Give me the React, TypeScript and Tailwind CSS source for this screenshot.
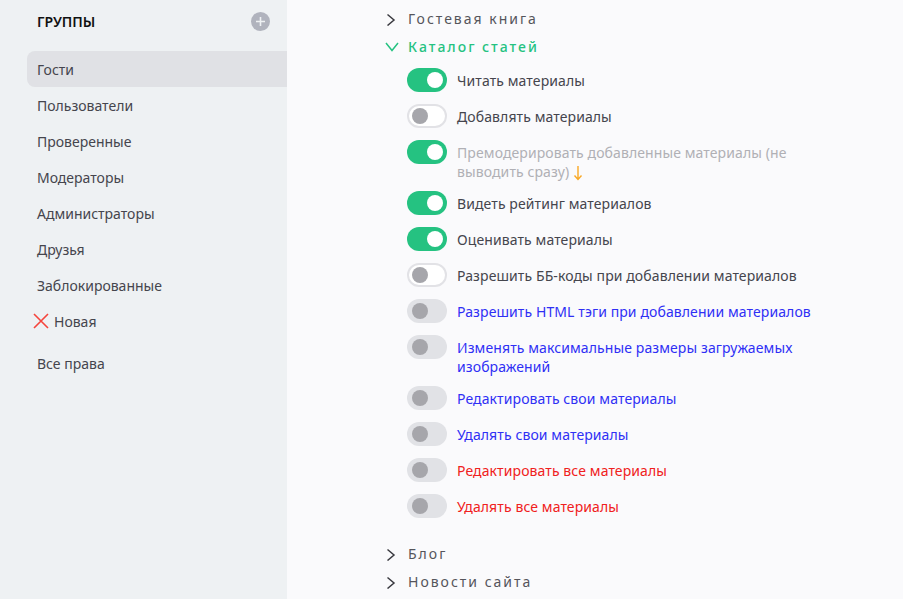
import React from "react";

const font = { fontFamily: '"Noto Sans", sans-serif' };

const groups = ["Гости", "Пользователи", "Проверенные", "Модераторы", "Администраторы", "Друзья", "Заблокированные"];

type Perm = { text: string[]; on?: boolean; outline?: boolean; color: string; arrow?: boolean };

const perms: Perm[] = [
  { text: ["Читать материалы"], on: true, color: "text-[#45454d]" },
  { text: ["Добавлять материалы"], outline: true, color: "text-[#45454d]" },
  { text: ["Премодерировать добавленные материалы (не", "выводить сразу)"], on: true, color: "text-[#b0b0b5]", arrow: true },
  { text: ["Видеть рейтинг материалов"], on: true, color: "text-[#45454d]" },
  { text: ["Оценивать материалы"], on: true, color: "text-[#45454d]" },
  { text: ["Разрешить ББ-коды при добавлении материалов"], outline: true, color: "text-[#45454d]" },
  { text: ["Разрешить HTML тэги при добавлении материалов"], color: "text-[#2f2ff5]" },
  { text: ["Изменять максимальные размеры загружаемых", "изображений"], color: "text-[#2f2ff5]" },
  { text: ["Редактировать свои материалы"], color: "text-[#2f2ff5]" },
  { text: ["Удалять свои материалы"], color: "text-[#2f2ff5]" },
  { text: ["Редактировать все материалы"], color: "text-[#f02020]" },
  { text: ["Удалять все материалы"], color: "text-[#f02020]" },
];

function Toggle({ on, outline }: { on?: boolean; outline?: boolean }) {
  if (on) {
    return (
      <div className="w-10 h-6 rounded-full bg-[#25c281] flex items-center justify-end pr-[4px] shrink-0">
        <div className="w-4 h-4 rounded-full bg-white" />
      </div>
    );
  }
  if (outline) {
    return (
      <div className="w-10 h-6 rounded-full flex items-center pl-[3px] shrink-0 bg-white border-2 border-[#e2e2e6]">
        <div className="w-4 h-4 rounded-full bg-[#a6a6ab]" />
      </div>
    );
  }
  return (
    <div className="w-10 h-6 rounded-full flex items-center pl-[5px] shrink-0 bg-[#e1e2e6]">
      <div className="w-4 h-4 rounded-full bg-[#a6a6ab]" />
    </div>
  );
}

function Chevron({ open }: { open?: boolean }) {
  return (
    <svg width="16" height="16" viewBox="0 0 16 16" fill="none" className="shrink-0">
      {open ? (
        <path d="M3 5 L9 12.5 L15 5" stroke="#25c281" strokeWidth="1.5" />
      ) : (
        <path d="M4.5 4.5 L11 10 L4.5 15.5" stroke="#3a3a40" strokeWidth="1.5" />
      )}
    </svg>
  );
}

function Section({ title, open }: { title: string; open?: boolean }) {
  return (
    <div className="flex items-center gap-[9px] h-[28px]">
      <Chevron open={open} />
      <span
        className={
          "text-[14px] tracking-[2px] " + (open ? "text-[#25c281] font-medium" : "text-[#55555b]")
        }
      >
        {title}
      </span>
    </div>
  );
}

export default function App() {
  return (
    <div className="flex w-[903px] h-[599px] overflow-hidden bg-[#fafafc]" style={font}>
      <aside className="w-[287px] shrink-0 bg-[#eef1f3] pl-[27px]">
        <div className="flex items-center justify-between h-[51px] pl-[10px] pr-[17px] pb-[8px]">
          <span className="text-[14px] font-semibold text-[#111]">ГРУППЫ</span>
          <div className="w-[19px] h-[19px] rounded-full bg-[#b0b3bd] flex items-center justify-center">
            <svg width="11" height="11" viewBox="0 0 11 11">
              <path d="M5.5 1 V10 M1 5.5 H10" stroke="#eef1f3" strokeWidth="1.6" />
            </svg>
          </div>
        </div>
        <ul>
          {groups.map((g, i) => (
            <li
              key={g}
              className={
                "h-9 flex items-center pl-[10px] text-[14px] text-[#45454d] " +
                (i === 0 ? "bg-[#e0e1e5] rounded-l-lg" : "")
              }
            >
              {g}
            </li>
          ))}
          <li className="h-9 flex items-center pl-[6px] gap-[5px] text-[14px] text-[#45454d]">
            <svg width="16" height="16" viewBox="0 0 16 16">
              <path d="M1 1 L15 15 M15 1 L1 15" stroke="#f5453c" strokeWidth="1.6" />
            </svg>
            Новая
          </li>
          <li className="h-9 flex items-center pl-[10px] mt-[6px] text-[14px] text-[#45454d]">Все права</li>
        </ul>
      </aside>
      <main className="flex-1 pl-[96px] pt-[4px]">
        <Section title="Гостевая книга" />
        <Section title="Каталог статей" open />
        <div className="pl-[24px] pt-[8px] pb-[21px] flex flex-col gap-3">
          {perms.map((p) => (
            <div key={p.text[0]} className="flex items-start gap-[10px] min-h-6">
              <Toggle on={p.on} outline={p.outline} />
              <div
                className={
                  "text-[14px] leading-[19px] tracking-[0.1px] pt-[3px] -mb-[2px] whitespace-nowrap " + p.color
                }
              >
                {p.text.map((t, i) => (
                  <div key={i}>
                    {t}
                    {p.arrow && i === 1 && (
                      <svg width="10" height="16" viewBox="0 0 10 16" className="inline-block ml-[4px] align-[-4px]">
                        <path d="M5 1 V14 M1.5 10.5 L5 14.5 L8.5 10.5" stroke="#f9a825" strokeWidth="1.4" fill="none" />
                      </svg>
                    )}
                  </div>
                ))}
              </div>
            </div>
          ))}
        </div>
        <Section title="Блог" />
        <Section title="Новости сайта" />
      </main>
    </div>
  );
}
